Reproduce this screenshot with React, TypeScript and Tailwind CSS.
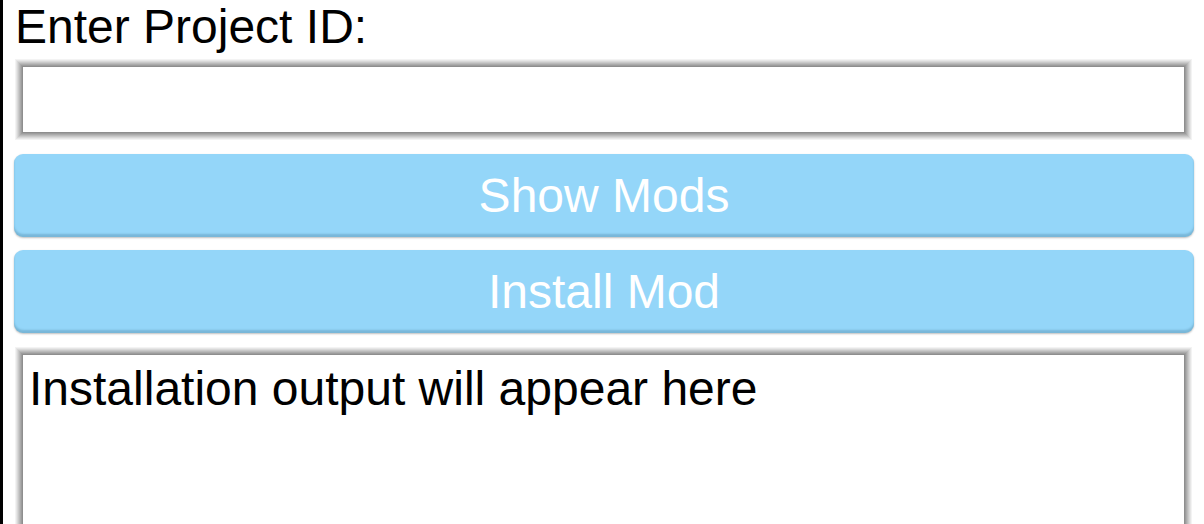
const ring =
  'shadow-[0_0_0_1px_#8e8e8e,0_0_0_2px_#9c9c9c,0_0_0_3px_#ababab,0_0_0_4px_#bababa,0_0_0_5px_#c9c9c9,0_0_0_6px_#d8d8d8,0_0_0_7px_#e6e6e6,0_0_0_8px_#f3f3f3]'

const ModButton = ({ label }: { label: string }) => (
  <button
    className="h-[83px] w-[1180px] ml-[11px] rounded-[9px] bg-[#94d6f9] text-white text-[48px] leading-none shadow-[inset_0_-3px_2px_rgba(40,90,120,0.25),0_1px_2px_rgba(0,0,0,0.25)]"
  >
    {label}
  </button>
)

export default function App() {
  return (
    <div className="min-h-screen w-[1204px] bg-white border-l-[3px] border-black font-['Liberation_Sans',Arial,sans-serif] text-black overflow-hidden">
      <div className="flex flex-col">
        <label className="ml-[12px] text-[48px] leading-[54px]">
          Enter Project ID:
        </label>
        <input
          type="text"
          className={`ml-[20px] mt-[13px] h-[65px] w-[1161px] bg-white outline-none ${ring}`}
        />
        <div className="mt-[22px] flex flex-col gap-[13px]">
          <ModButton label="Show Mods" />
          <ModButton label="Install Mod" />
        </div>
        <textarea
          readOnly
          className={`ml-[20px] mt-[22px] h-[200px] w-[1161px] resize-none bg-white outline-none px-[6px] pt-[8px] text-[48px] leading-[52px] ${ring}`}
          defaultValue="Installation output will appear here"
        />
      </div>
    </div>
  )
}
